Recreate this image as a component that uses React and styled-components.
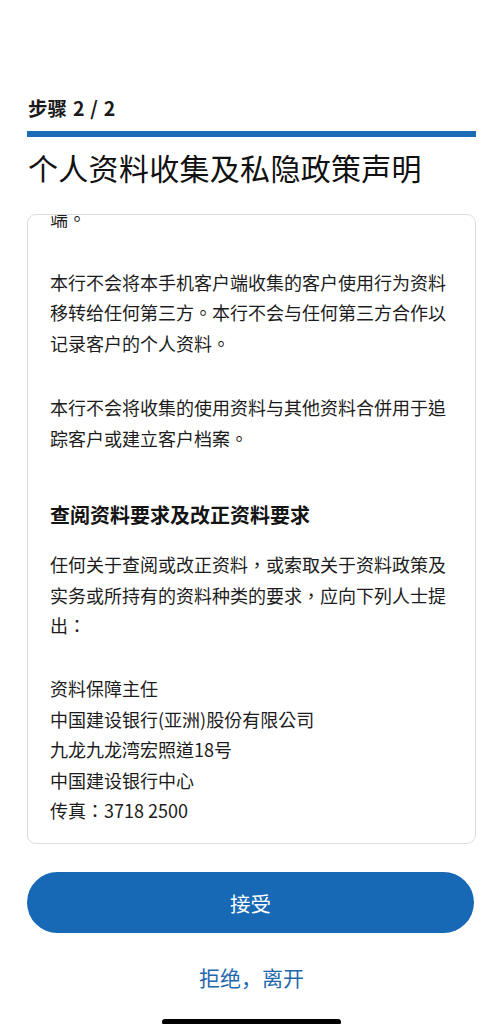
import React, { useLayoutEffect, useRef } from "react";
import styled, { createGlobalStyle } from "styled-components";

const GlobalStyle = createGlobalStyle`
  html, body { margin: 0; padding: 0; background: #ffffff; }
  body {
    font-family: "Noto Sans CJK SC", "Noto Sans", sans-serif;
    color: #1c1c1c;
    -webkit-font-smoothing: antialiased;
  }
`;

const Page = styled.div`
  position: relative;
  width: 503px;
  height: 1024px;
  box-sizing: border-box;
  padding: 95px 27px 0 27px;
  display: flex;
  flex-direction: column;
  overflow: hidden;
`;

const StepLabel = styled.div`
  font-size: 19.5px;
  font-weight: 700;
  line-height: 26px;
  color: #1a1a1a;
  padding-left: 1px;
  word-spacing: 1.5px;
`;

const ProgressBar = styled.div`
  margin-top: 10px;
  height: 6px;
  background: #1b6bb6;
`;

const Title = styled.h1`
  margin: 10px 0 0 0;
  padding-left: 1px;
  font-size: 30px;
  font-weight: 400;
  line-height: 40px;
  color: #111111;
  letter-spacing: 0.3px;
`;

const Card = styled.div`
  margin-top: 27px;
  height: 630px;
  box-sizing: border-box;
  border: 1px solid #dddddd;
  border-radius: 9px;
  overflow-y: auto;
  position: relative;
  padding: 0 22px 17px 22px;
  font-family: "Noto Sans CJK TC", "Noto Sans CJK SC", sans-serif;
  scrollbar-width: none;
  &::-webkit-scrollbar { display: none; }
`;

const Paragraph = styled.p`
  margin: 0 0 ${(p) => p.$gap ?? 34}px 0;
  font-size: 18px;
  line-height: 30.5px;
  color: #1c1c1c;
  &:last-child { margin-bottom: 0; }
`;

const SectionHeading = styled.h2`
  margin: 47px 0 19px 0;
  font-size: 20px;
  font-weight: 700;
  line-height: 30px;
  color: #141414;
`;

const AcceptButton = styled.button`
  margin-top: 28px;
  height: 61px;
  width: 447px;
  border: none;
  border-radius: 31px;
  background: #1769b6;
  color: #ffffff;
  font-family: "Noto Sans CJK SC", "Noto Sans", sans-serif;
  font-size: 20.5px;
  font-weight: 400;
  cursor: pointer;
`;

const DeclineLink = styled.button`
  margin-top: 30px;
  align-self: center;
  border: none;
  background: none;
  padding: 0;
  color: #1f67ad;
  font-family: "Noto Sans CJK SC", "Noto Sans", sans-serif;
  font-size: 21px;
  line-height: 28px;
  cursor: pointer;
`;

const HomeIndicator = styled.div`
  position: absolute;
  left: 162px;
  bottom: -1px;
  width: 179px;
  height: 6px;
  border-radius: 3px;
  background: #000000;
`;

export default function App() {
  const cardRef = useRef(null);
  const anchorRef = useRef(null);

  useLayoutEffect(() => {
    if (cardRef.current && anchorRef.current) {
      cardRef.current.scrollTop = anchorRef.current.offsetTop - 51.75;
    }
  }, []);

  return (
    <>
      <GlobalStyle />
      <Page>
        <StepLabel>步骤 2 / 2</StepLabel>
        <ProgressBar />
        <Title>个人资料收集及私隐政策声明</Title>
        <Card ref={cardRef}>
          <Paragraph $gap={33}>
            本行只会收集客户使用本手机客户端的行为资料，以作统计分析用途，从而改善及优化本行手机客户端。
          </Paragraph>
          <Paragraph ref={anchorRef}>
            本行不会将本手机客户端收集的客户使用行为资料移转给任何第三方。本行不会与任何第三方合作以记录客户的个人资料。
          </Paragraph>
          <Paragraph>
            本行不会将收集的使用资料与其他资料合併用于追踪客户或建立客户档案。
          </Paragraph>
          <SectionHeading>查阅资料要求及改正资料要求</SectionHeading>
          <Paragraph $gap={32.5}>
            任何关于查阅或改正资料，或索取关于资料政策及实务或所持有的资料种类的要求，应向下列人士提出：
          </Paragraph>
          <Paragraph>
            资料保障主任
            <br />
            中国建设银行(亚洲)股份有限公司
            <br />
            九龙九龙湾宏照道18号
            <br />
            中国建设银行中心
            <br />
            传真：3718 2500
          </Paragraph>
        </Card>
        <AcceptButton>接受</AcceptButton>
        <DeclineLink>拒绝，离开</DeclineLink>
        <HomeIndicator />
      </Page>
    </>
  );
}
